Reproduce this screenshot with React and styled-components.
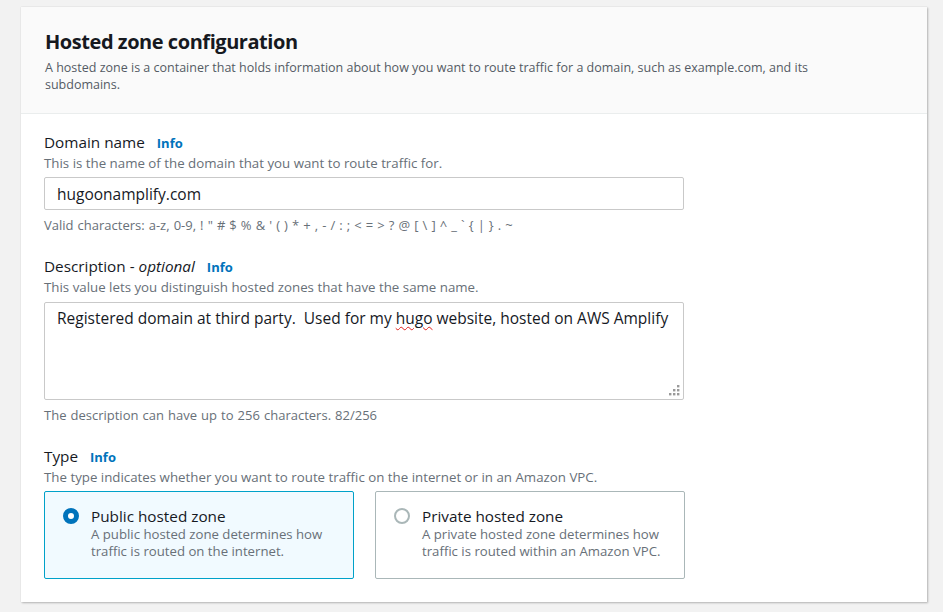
import styled, { createGlobalStyle } from "styled-components";

const GlobalStyle = createGlobalStyle`
  html, body {
    margin: 0;
    padding: 0;
    background: #f2f2f2;
  }
  body {
    font-family: "Open Sans", "Noto Sans", Arial, sans-serif;
    color: #16191f;
  }
`;

function ResizeGrip() {
  const dots = [
    [9, 1], [9, 5], [5, 5], [9, 9], [5, 9], [1, 9],
  ];
  return (
    <StGrip width="12" height="12" viewBox="0 0 12 12">
      {dots.map(([x, y]) => (
        <rect key={`${x}-${y}`} x={x} y={y} width="2.4" height="2.4" fill="#9a9a9a" />
      ))}
    </StGrip>
  );
}

function RadioCard({ checked, title, children }) {
  return (
    <StRadioCard $checked={checked}>
      <StRadioDot $checked={checked} />
      <div>
        <StRadioTitle>{title}</StRadioTitle>
        <StRadioDesc>{children}</StRadioDesc>
      </div>
    </StRadioCard>
  );
}

function App() {
  return (
    <StPage>
      <GlobalStyle />
      <StCard>
        <StHeader>
          <h2>Hosted zone configuration</h2>
          <p>
            A hosted zone is a container that holds information about how you want to route traffic for a domain, such as example.com, and its
            subdomains.
          </p>
        </StHeader>

        <StBody>
          {/* Domain name */}
          <StField>
            <StLabel>
              Domain name <StInfo>Info</StInfo>
            </StLabel>
            <StHint>This is the name of the domain that you want to route traffic for.</StHint>
            <StInput>hugoonamplify.com</StInput>
            <StConstraint>
              Valid characters: a-z, 0-9, ! " # $ % &amp; ' ( ) * + , - / : ; &lt; = &gt; ? @ [ \ ] ^ _ ` {"{"} | {"}"} . ~
            </StConstraint>
          </StField>

          {/* Description */}
          <StField>
            <StLabel>
              Description - <em>optional</em> <StInfo>Info</StInfo>
            </StLabel>
            <StHint>This value lets you distinguish hosted zones that have the same name.</StHint>
            <StTextArea>
              Registered domain at third party.&nbsp; Used for my <StTypo>hugo</StTypo> website, hosted on AWS Amplify
              <ResizeGrip />
            </StTextArea>
            <StConstraint>The description can have up to 256 characters. 82/256</StConstraint>
          </StField>

          {/* Type */}
          <StField>
            <StLabel>
              Type <StInfo>Info</StInfo>
            </StLabel>
            <StHint>The type indicates whether you want to route traffic on the internet or in an Amazon VPC.</StHint>
            <StRadioGroup>
              <RadioCard checked title="Public hosted zone">
                A public hosted zone determines how traffic is routed on the internet.
              </RadioCard>
              <RadioCard title="Private hosted zone">
                A private hosted zone determines how traffic is routed within an Amazon VPC.
              </RadioCard>
            </StRadioGroup>
          </StField>
        </StBody>
      </StCard>
    </StPage>
  );
}

export default App;

const StPage = styled.div`
  padding: 7px 16px 10px 21px;
`;

const StCard = styled.div`
  width: 906px;
  background: #fff;
  box-shadow: 1px 1px 2px rgba(0, 0, 0, 0.25), 0 0 1px rgba(0, 0, 0, 0.15);
`;

const StHeader = styled.div`
  background: #fafafa;
  border-bottom: 1px solid #eaeded;
  padding: 22px 24px 20px 24px;

  & h2 {
    margin: 0;
    font-size: 20px;
    line-height: 26px;
    font-weight: 700;
    letter-spacing: -0.45px;
  }

  & p {
    margin: 4px 0 0;
    font-size: 12.5px;
    line-height: 17px;
    color: #545b64;
    max-width: 820px;
  }
`;

const StBody = styled.div`
  padding: 18px 24px 23px 23px;
  display: flex;
  flex-direction: column;
  gap: 22px;
`;

const StField = styled.div`
  display: flex;
  flex-direction: column;
`;

const StLabel = styled.div`
  font-size: 15.3px;
  line-height: 20px;
  color: #16191f;

  & em {
    font-style: italic;
  }
`;

const StInfo = styled.span`
  margin-left: 8px;
  font-size: 13px;
  font-weight: 700;
  color: #0073bb;
`;

const StHint = styled.div`
  margin-top: 1px;
  font-size: 13.3px;
  line-height: 18px;
  color: #687078;
`;

const StInput = styled.div`
  box-sizing: border-box;
  width: 640px;
  height: 33px;
  margin-top: 5px;
  padding: 0 12px;
  display: flex;
  align-items: center;
  border: 1px solid #c9c9c9;
  border-radius: 2px;
  font-size: 15.5px;
  color: #16191f;
`;

const StConstraint = styled.div`
  margin-top: 7px;
  font-size: 13px;
  line-height: 17px;
  word-spacing: 0.7px;
  color: #687078;
`;

const StTextArea = styled.div`
  position: relative;
  box-sizing: border-box;
  width: 640px;
  height: 98px;
  margin-top: 6px;
  padding: 4px 12px;
  border: 1px solid #c9c9c9;
  border-radius: 2px;
  font-size: 15.5px;
  line-height: 22px;
  color: #16191f;
`;

const StTypo = styled.span`
  text-decoration: underline wavy #e0201b;
  text-decoration-thickness: 1px;
  text-underline-offset: 2px;
`;

const StGrip = styled.svg`
  position: absolute;
  right: 3px;
  bottom: 3px;
`;

const StRadioGroup = styled.div`
  margin-top: 5px;
  display: grid;
  grid-template-columns: 310px 310px;
  column-gap: 21px;
`;

const StRadioCard = styled.div`
  box-sizing: border-box;
  height: 88px;
  display: flex;
  align-items: flex-start;
  gap: 12px;
  padding: 15px 18px;
  border: 1px solid ${(p) => (p.$checked ? "#00a1c9" : "#aab7b8")};
  border-radius: 2px;
  background: ${(p) => (p.$checked ? "#f1faff" : "#fff")};
`;

const StRadioDot = styled.span`
  flex: none;
  box-sizing: border-box;
  width: 16px;
  height: 16px;
  margin-top: 1px;
  border-radius: 50%;
  background: #fff;
  border: ${(p) => (p.$checked ? "5px solid #0073bb" : "2px solid #aab7b8")};
`;

const StRadioTitle = styled.div`
  font-size: 15.3px;
  line-height: 19px;
  color: #16191f;
`;

const StRadioDesc = styled.div`
  font-size: 13.2px;
  line-height: 17px;
  color: #687078;
`;
